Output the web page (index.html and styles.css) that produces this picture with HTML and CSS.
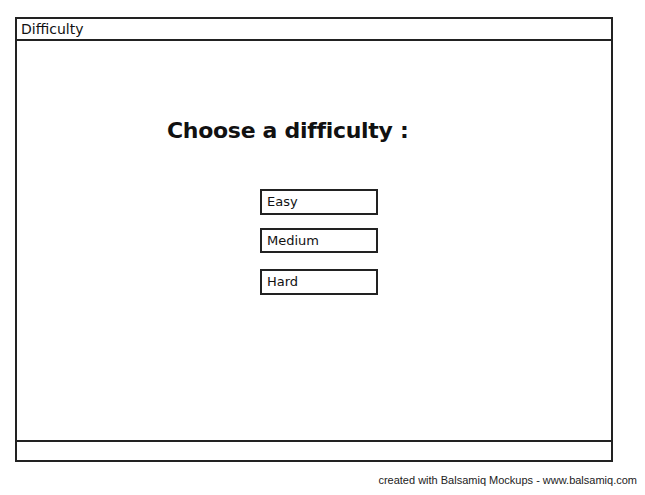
FILE: index.html
```html
<!DOCTYPE html>
<html lang="en">
<head>
    <meta charset="UTF-8">
    <title>Difficulty</title>
    <link rel="stylesheet" href="styles.css">
</head>
<body>
    <div class="window">
        <div class="titlebar">Difficulty</div>
        <div class="content">
            <h1 class="heading">Choose a difficulty :</h1>
            <div class="choices">
                <div class="choice">Easy</div>
                <div class="choice">Medium</div>
                <div class="choice">Hard</div>
            </div>
        </div>
        <div class="statusbar"></div>
    </div>
    <p class="credit">created with Balsamiq Mockups - www.balsamiq.com</p>
</body>
</html>
```
FILE: styles.css
```css
body {
    background-color: #fff;
    font-family: "Comic Sans MS", "DejaVu Sans", sans-serif;
    color: #111;
    margin: 0;
    padding: 0;
}
.window {
    margin: 17px 0 0 15px;
    width: 598px;
    height: 445px;
    border: 2px solid #222;
    box-sizing: border-box;
    display: flex;
    flex-direction: column;
}
.titlebar {
    height: 22px;
    border-bottom: 2px solid #222;
    box-sizing: border-box;
    font-size: 14px;
    line-height: 20px;
    padding-left: 4px;
}
.content {
    flex: 1;
    padding: 75px 0 0 150px;
}
.heading {
    margin: 0;
    font-size: 22px;
    font-weight: bold;
    letter-spacing: -0.3px;
    line-height: 30px;
}
.choices {
    margin: 43px 0 0 93px;
    display: flex;
    flex-direction: column;
    gap: 14px;
}
.choice {
    width: 118px;
    height: 26px;
    border: 2px solid #222;
    box-sizing: border-box;
    font-size: 13px;
    line-height: 22px;
    padding-left: 5px;
}
.choice:nth-child(2) {
    margin-top: -1px;
    height: 25px;
}
.choice:nth-child(3) {
    margin-top: 2px;
}
.statusbar {
    height: 20px;
    border-top: 2px solid #222;
    box-sizing: border-box;
}
.credit {
    margin: 12px 8px 0 0;
    text-align: right;
    font-family: "Liberation Sans", Arial, sans-serif;
    font-size: 11px;
    color: #222;
}
```
